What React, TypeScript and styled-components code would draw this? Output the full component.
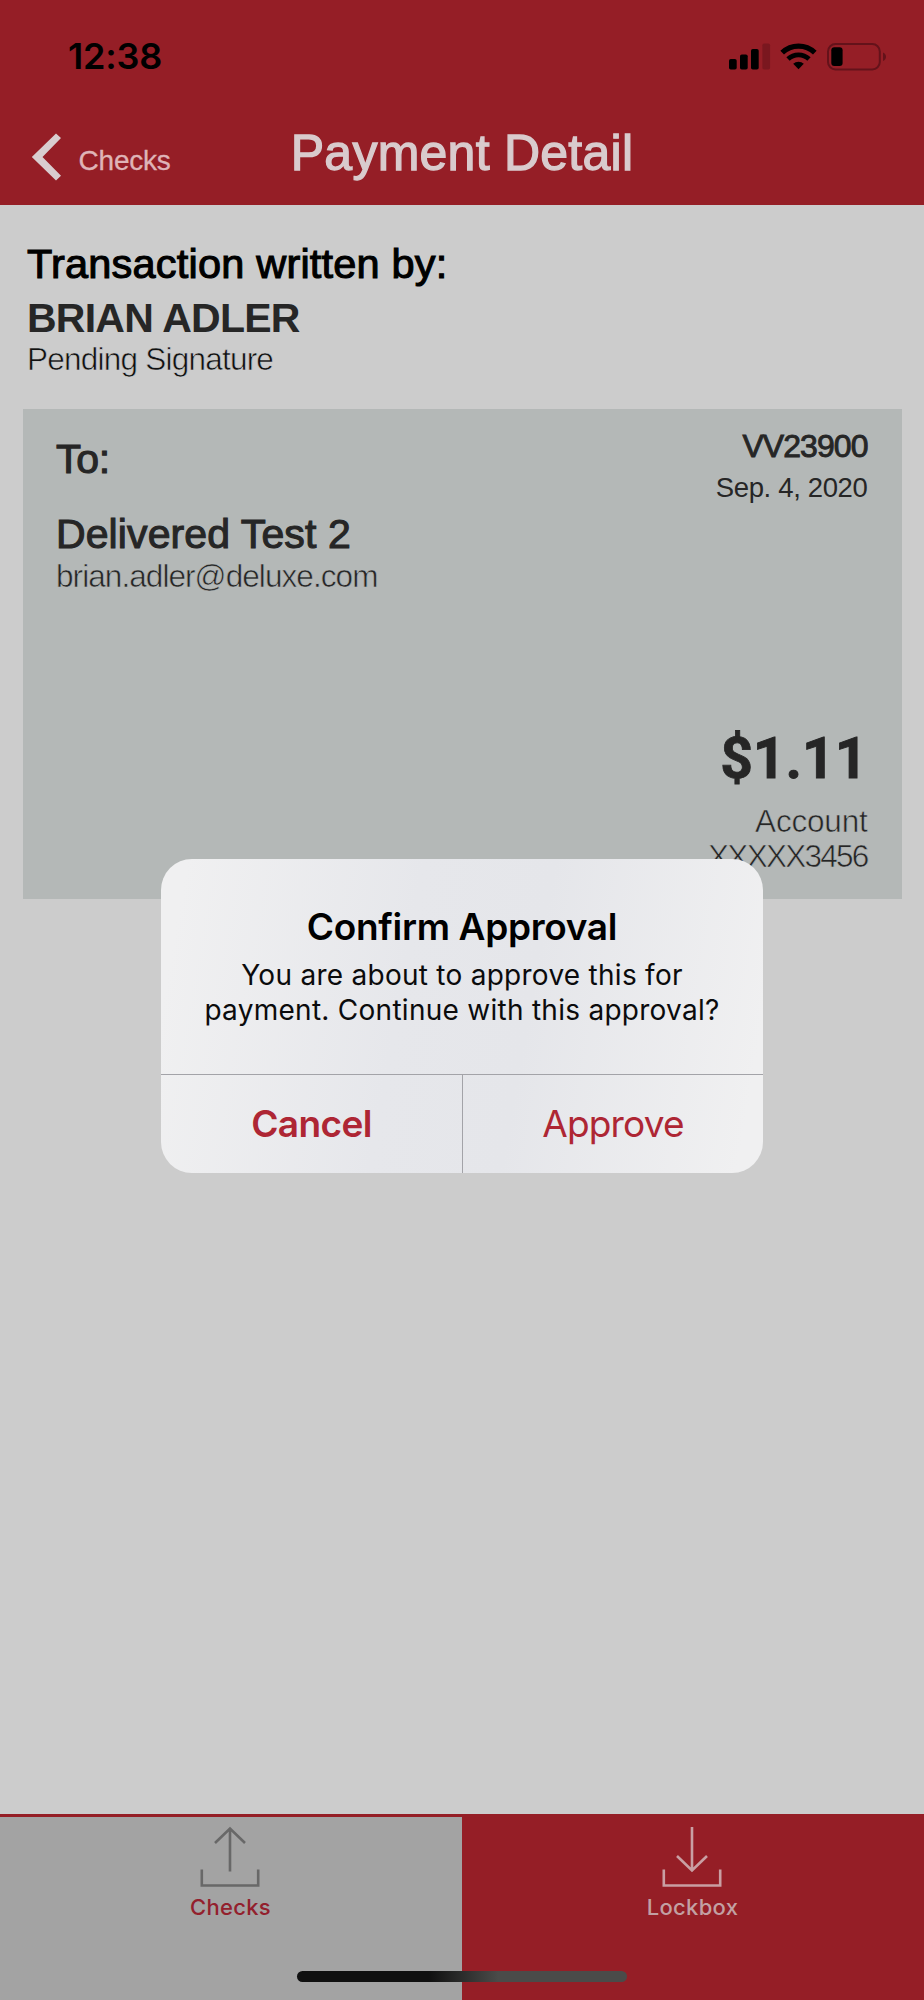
import React from "react";
import styled, { createGlobalStyle } from "styled-components";

const GlobalStyle = createGlobalStyle`
  *, *::before, *::after { box-sizing: border-box; }
  body { margin: 0; background: #cccccc; }
  button { border: 0; padding: 0; background: none; font: inherit; color: inherit; }
`;

const helvetica = `"Liberation Sans", Arial, sans-serif`;
const system = `Inter, "Liberation Sans", sans-serif`;
const red = "#951e26";
const paper = "#cccccc";
const slate = "#b4b8b7";

const Screen = styled.div`
  position: relative;
  display: flex;
  flex-direction: column;
  width: 924px;
  height: 2000px;
  overflow: hidden;
  background: ${paper};
  font-family: ${helvetica};
`;

const Header = styled.header`
  height: 205px;
  background: ${red};
`;

const StatusBar = styled.div`
  display: flex;
  align-items: center;
  justify-content: space-between;
  height: 111px;
  padding: 0 38px 0 68px;
`;

const Clock = styled.span`
  font: 600 36px/44px ${system};
  letter-spacing: -0.2px;
  color: #000;
`;

const StatusIcons = styled.svg`
  display: block;
  width: 158px;
  height: 30px;
`;

const NavBar = styled.nav`
  display: grid;
  grid-template-columns: 1fr auto 1fr;
  align-items: center;
  height: 94px;
`;

const BackButton = styled.button`
  display: flex;
  align-items: center;
  padding: 0 0 2px 31px;
  text-align: left;
`;

const BackLabel = styled.span`
  margin: 8px 0 0 15.5px;
  font: 400 28px/32px ${helvetica};
  letter-spacing: -0.2px;
  color: #dfb4b7;
  -webkit-text-stroke: 0.3px #dfb4b7;
`;

const Title = styled.h1`
  margin: 0;
  padding-bottom: 10px;
  font: 400 50px/60px ${helvetica};
  letter-spacing: 0.25px;
  color: #d9cbcd;
  -webkit-text-stroke: 1.3px #d9cbcd;
`;

const Main = styled.main`
  flex: 1;
  padding: 34px 22.5px 0;
`;

const Writer = styled.section`
  height: 170px;
  padding-left: 4.5px;
`;

interface LineProps {
  $size: number;
  $leading: number;
  $color?: string;
  $weight?: number;
  $gap?: number;
  $track?: number;
  $stroke?: string;
}

const Line = styled.div<LineProps>`
  margin-top: ${(p) => p.$gap ?? 0}px;
  font-size: ${(p) => p.$size}px;
  line-height: ${(p) => p.$leading}px;
  font-weight: ${(p) => p.$weight ?? 400};
  letter-spacing: ${(p) => p.$track ?? 0}px;
  color: ${(p) => p.$color ?? "#262626"};
  -webkit-text-stroke: ${(p) => p.$stroke ?? "0"};
  white-space: nowrap;
`;

const Card = styled.section`
  display: flex;
  justify-content: space-between;
  height: 490px;
  padding: 18.5px 34px 24.5px 33.5px;
  background: ${slate};
`;

const Payee = styled.div`
  padding-top: 6px;
`;

const Summary = styled.div`
  display: flex;
  flex-direction: column;
  text-align: right;
`;

const Amount = styled.div`
  margin: auto 0 14.5px;
  font: 700 57px/60px Roboto, ${helvetica};
  color: #262626;
  -webkit-text-stroke: 0.8px #262626;
`;

const TabBar = styled.footer`
  position: relative;
  display: grid;
  grid-template-columns: 1fr 1fr;
  height: 186px;
  border-top: 3px solid ${red};
`;

const Tab = styled.button<{ $active?: boolean }>`
  display: flex;
  flex-direction: column;
  align-items: center;
  padding: 8px 2px 0 0;
  background: ${(p) => (p.$active ? "#a3a3a3" : red)};
  color: ${(p) => (p.$active ? "#686868" : "#c99fa3")};
`;

const TabLabel = styled.span<{ $active?: boolean }>`
  margin: 5px 0 0 1px;
  font: 500 22px/26px ${system};
  letter-spacing: 0.3px;
  color: ${(p) => (p.$active ? "#93202d" : "#c2a0a3")};
`;

const HomeIndicator = styled.div`
  position: absolute;
  left: 297px;
  bottom: 18px;
  width: 330px;
  height: 11px;
  border-radius: 6px;
  background: linear-gradient(90deg, #101010 40%, #4a4b49 61%);
`;

const Overlay = styled.div`
  position: absolute;
  inset: 0;
  display: flex;
  align-items: center;
  justify-content: center;
  padding-top: 32px;
`;

const Dialog = styled.div`
  display: flex;
  flex-direction: column;
  width: 602px;
  height: 314px;
  border-radius: 31px;
  overflow: hidden;
  background: linear-gradient(100deg, #f0f0f1 4%, #e6e7eb 40%, #e5e6ea 60%, #f0f0f1 96%);
  font-family: ${system};
  text-align: center;
`;

const DialogBody = styled.div`
  height: 214.5px;
  padding-top: 45.5px;
`;

const DialogTitle = styled.h2`
  margin: 0 0 9px;
  font-size: 37px;
  line-height: 44px;
  font-weight: 600;
  letter-spacing: -0.33px;
  color: #000;
`;

const DialogText = styled.p`
  margin: 0;
  font-size: 28px;
  line-height: 35.8px;
  letter-spacing: 0.27px;
  color: #0b0b0c;
`;

const DialogActions = styled.div`
  display: grid;
  grid-template-columns: 1fr 1fr;
  flex: 1;
  border-top: 1px solid #a3a3a8;
`;

const DialogButton = styled.button<{ $strong?: boolean }>`
  font-size: 37px;
  line-height: 44px;
  font-weight: ${(p) => (p.$strong ? 600 : 400)};
  letter-spacing: ${(p) => (p.$strong ? -0.6 : -0.8)}px;
  color: #ae2634;

  & + & {
    border-left: 1px solid #a3a3a8;
  }
`;

const TrayIcon = ({ down }: { down?: boolean }) => (
  <svg width="64" height="64" viewBox="0 0 64 64" fill="none" stroke="currentColor" strokeWidth="2.6">
    <path d="M3.8 44.5v16h56.4v-16" />
    <path d={down ? "M32 2v43M17 31l15 14.500l15-14.500" : "M32 46.500V3.500M17 18l15-14.500l15 14.500"} />
  </svg>
);

const DeviceStatus = () => (
  <StatusIcons viewBox="0 0 158 30">
    <rect x="1" y="18" width="7.7" height="10.5" rx="1.8" />
    <rect x="12" y="13.5" width="7.7" height="15" rx="1.8" />
    <rect x="23" y="8" width="7.7" height="20.5" rx="1.8" />
    <rect x="34.4" y="2.5" width="7.7" height="26" rx="1.8" fill="#7a171f" />
    <g fill="none" stroke="#000">
      <path d="M54.2 11.7a23.5 23.5 0 0 1 32.6 0" strokeWidth="5.2" />
      <path d="M60 18a15.3 15.3 0 0 1 21 0" strokeWidth="4.8" />
    </g>
    <path d="M70.5 28.2l-5.3-5.4a7.6 7.6 0 0 1 10.6 0z" />
    <rect x="100" y="3" width="51.8" height="25.5" rx="7.5" fill="none" stroke="#64121a" strokeWidth="2" />
    <rect x="103.3" y="6.3" width="11.3" height="18.8" rx="3" />
    <path d="M155 11.5c4 1.500 4 7 0 8.500z" fill="#64121a" />
  </StatusIcons>
);

export default function App() {
  return (
    <Screen>
      <GlobalStyle />
      <Header>
        <StatusBar>
          <Clock>12:38</Clock>
          <DeviceStatus />
        </StatusBar>
        <NavBar>
          <BackButton>
            <svg width="32" height="48" viewBox="0 0 32 48" fill="#d9cdcf">
              <path d="M25 .5l5 4.500L11.500 24L30 42.800l-5 4.600L.8 24z" />
            </svg>
            <BackLabel>Checks</BackLabel>
          </BackButton>
          <Title>Payment Detail</Title>
        </NavBar>
      </Header>

      <Main>
        <Writer>
          <Line $size={41.5} $leading={50} $track={0.2} $color="#000" $stroke="1.1px #000">
            Transaction written by:
          </Line>
          <Line $size={41} $leading={45} $gap={6.8} $weight={700} $track={-0.75}>BRIAN ADLER</Line>
          <Line $size={31.5} $leading={36} $track={-0.77} $color="#111" $stroke={`0.6px ${paper}`}>
            Pending Signature
          </Line>
        </Writer>
        <Card>
          <Payee>
            <Line $size={41} $leading={50} $track={-0.3} $stroke="1.1px #262626">To:</Line>
            <Line $size={41} $leading={48.6} $gap={26} $track={0.1} $stroke="1.1px #262626">
              Delivered Test 2
            </Line>
            <Line $size={31.5} $leading={36} $track={-0.93} $stroke={`0.6px ${slate}`}>
              brian.adler@deluxe.com
            </Line>
          </Payee>
          <Summary>
            <Line $size={32} $leading={36} $track={-0.95} $stroke="0.9px #262626">VV23900</Line>
            <Line $size={27.5} $leading={36} $gap={6} $track={-0.35}>Sep. 4, 2020</Line>
            <Amount>$1.11</Amount>
            <Line $size={31.5} $leading={35.5} $track={-0.2} $stroke={`0.6px ${slate}`}>Account</Line>
            <Line $size={31.5} $leading={35.5} $track={-1.75} $stroke={`0.6px ${slate}`}>XXXXX3456</Line>
          </Summary>
        </Card>
      </Main>

      <TabBar>
        <Tab $active>
          <TrayIcon />
          <TabLabel $active>Checks</TabLabel>
        </Tab>
        <Tab>
          <TrayIcon down />
          <TabLabel>Lockbox</TabLabel>
        </Tab>
        <HomeIndicator />
      </TabBar>

      <Overlay>
        <Dialog role="alertdialog">
          <DialogBody>
            <DialogTitle>Confirm Approval</DialogTitle>
            <DialogText>
              You are about to approve this for
              <br />
              payment. Continue with this approval?
            </DialogText>
          </DialogBody>
          <DialogActions>
            <DialogButton $strong>Cancel</DialogButton>
            <DialogButton>Approve</DialogButton>
          </DialogActions>
        </Dialog>
      </Overlay>
    </Screen>
  );
}
